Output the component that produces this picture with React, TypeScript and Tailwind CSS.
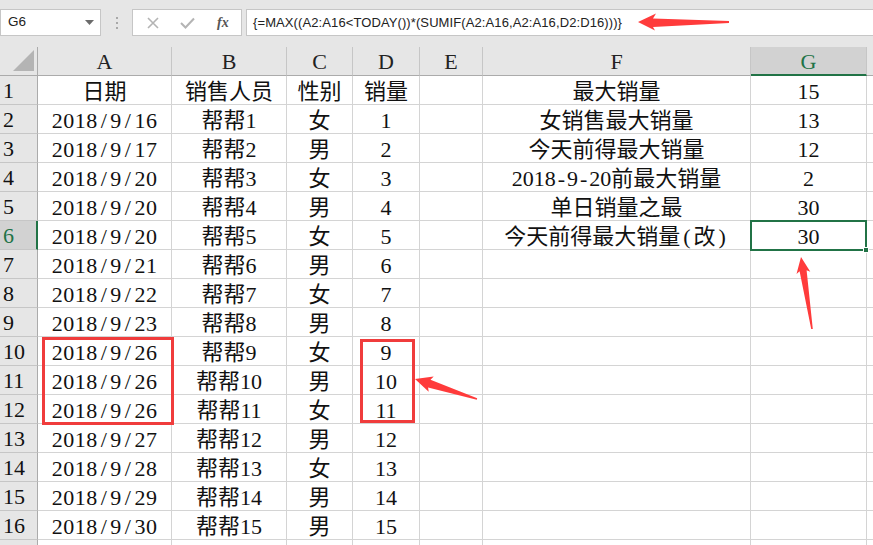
import React from 'react';

const COLS = ['A', 'B', 'C', 'D', 'E', 'F', 'G'];

const ROWS: string[][] = [
  ['日期', '销售人员', '性别', '销量', '', '最大销量', '15'],
  ['2018/9/16', '帮帮1', '女', '1', '', '女销售最大销量', '13'],
  ['2018/9/17', '帮帮2', '男', '2', '', '今天前得最大销量', '12'],
  ['2018/9/20', '帮帮3', '女', '3', '', '2018-9-20前最大销量', '2'],
  ['2018/9/20', '帮帮4', '男', '4', '', '单日销量之最', '30'],
  ['2018/9/20', '帮帮5', '女', '5', '', '今天前得最大销量(改)', '30'],
  ['2018/9/21', '帮帮6', '男', '6', '', '', ''],
  ['2018/9/22', '帮帮7', '女', '7', '', '', ''],
  ['2018/9/23', '帮帮8', '男', '8', '', '', ''],
  ['2018/9/26', '帮帮9', '女', '9', '', '', ''],
  ['2018/9/26', '帮帮10', '男', '10', '', '', ''],
  ['2018/9/26', '帮帮11', '女', '11', '', '', ''],
  ['2018/9/27', '帮帮12', '男', '12', '', '', ''],
  ['2018/9/28', '帮帮13', '女', '13', '', '', ''],
  ['2018/9/29', '帮帮14', '男', '14', '', '', ''],
  ['2018/9/30', '帮帮15', '男', '15', '', '', ''],
];

const grid = 'grid grid-cols-[38px_134px_115px_66px_67px_63px_268px_116px_1fr]';
const cellFont = "font-['Liberation_Serif','Noto_Sans_CJK_SC',serif] text-[22px] leading-none";

// SimSun draws / - ( ) half-width, wider than Times; pad them out
function CellText({ v }: { v: string }) {
  const parts = v.split(/([/()\-])/);
  return (
    <span className={v.includes('/') ? 'tracking-[0.5px]' : ''}>
      {parts.map((p, i) => {
        if (p === '/' || p === '(' || p === ')') return <span key={i} className="px-[3px]">{p}</span>;
        if (p === '-') return <span key={i} className="px-[2px]">{p}</span>;
        return <React.Fragment key={i}>{p}</React.Fragment>;
      })}
    </span>
  );
}

function Toolbar() {
  return (
    <div className="flex h-[47px] items-start bg-[#e6e6e6] pt-[9px]">
      <div className="flex h-[27px] w-[101px] items-center justify-between border border-[#c6c6c6] bg-white pl-[7px] pr-[6px]">
        <span className="font-['Liberation_Sans',sans-serif] text-[13.5px] text-[#222]">G6</span>
        <svg width="9" height="5" viewBox="0 0 9 5">
          <polygon points="0,0 9,0 4.5,5" fill="#6b6b6b" />
        </svg>
      </div>
      <div className="flex h-[27px] w-[31px] flex-col items-center justify-center gap-[3px]">
        <span className="h-[2px] w-[2px] bg-[#a8a8a8]" />
        <span className="h-[2px] w-[2px] bg-[#a8a8a8]" />
        <span className="h-[2px] w-[2px] bg-[#a8a8a8]" />
      </div>
      <div className="flex h-[27px] w-[110px] items-center border border-[#c6c6c6] bg-white">
        <svg className="ml-[14px]" width="12" height="12" viewBox="0 0 12 12">
          <path d="M1 1 L11 11 M11 1 L1 11" stroke="#b4b4b4" strokeWidth="1.6" />
        </svg>
        <svg className="ml-[21px]" width="15" height="12" viewBox="0 0 15 12">
          <path d="M1 6 L5.5 10.5 L14 1.5" stroke="#b4b4b4" strokeWidth="2" fill="none" />
        </svg>
        <span className="ml-[22px] font-['Liberation_Serif',serif] text-[14px] font-bold italic text-[#555]">fx</span>
      </div>
      <div className="ml-[4px] flex h-[27px] flex-1 items-center border border-r-0 border-[#c6c6c6] bg-white pl-[6px]">
        <span className="font-['Liberation_Sans',sans-serif] text-[13px] tracking-[0.1px] text-[#222]">
          {'{=MAX((A2:A16<TODAY())*(SUMIF(A2:A16,A2:A16,D2:D16)))}'}
        </span>
      </div>
    </div>
  );
}

function ColumnHeader() {
  return (
    <div className={`${grid} h-[29px] bg-[#e6e6e6]`}>
      <div className="relative border-r border-b border-[#ababab]">
        <svg className="absolute right-[3px] bottom-[4px]" width="21" height="21" viewBox="0 0 21 21">
          <polygon points="21,0 21,21 0,21" fill="#b4b4b4" />
        </svg>
      </div>
      {COLS.map((c) => {
        const active = c === 'G';
        return (
          <div
            key={c}
            className={
              active
                ? `flex items-center justify-center border-r border-[#c6c6c6] border-b-2 border-b-[#217346] bg-[#d2d2d2] pt-[2px] text-[#217346] ${cellFont}`
                : `flex items-center justify-center border-r border-b border-[#c6c6c6] border-b-[#ababab] pt-[2px] text-[#222] ${cellFont}`
            }
          >
            {c}
          </div>
        );
      })}
      <div className="border-b border-[#ababab]" />
    </div>
  );
}

function Row({ n, cells }: { n: number | null; cells: string[] }) {
  const active = n === 6;
  return (
    <div className={`${grid} h-[29px]`}>
      <div
        className={
          active
            ? `flex items-center border-b border-[#c6c6c6] border-r-2 border-r-[#217346] bg-[#d2d2d2] pl-[3px] pt-[2px] text-[#217346] ${cellFont}`
            : `flex items-center border-b border-[#c6c6c6] border-r border-r-[#ababab] bg-[#e6e6e6] pl-[3px] pt-[2px] text-[#111] ${cellFont}`
        }
      >
        {n}
      </div>
      {cells.map((v, i) => (
        <div
          key={i}
          className={`flex items-center justify-center border-r border-b border-[#d4d4d4] pt-[3px] text-[#111] ${cellFont}`}
        >
          <CellText v={v} />
        </div>
      ))}
      <div className="border-b border-[#d4d4d4]" />
    </div>
  );
}

export default function App() {
  return (
    <div className="relative h-[545px] w-[873px] overflow-hidden bg-white">
      <Toolbar />
      <ColumnHeader />
      {ROWS.map((r, i) => (
        <Row key={i} n={i + 1} cells={r} />
      ))}
      {/* row 17 is only a sliver at the bottom edge */}
      <Row n={null} cells={['', '', '', '', '', '', '']} />

      {/* selection of G6 */}
      <div className="pointer-events-none absolute left-[750px] top-[220px] h-[31px] w-[117px] border-2 border-[#217346]">
        <span className="absolute -right-[4px] -bottom-[4px] h-[6px] w-[6px] border border-white bg-[#217346]" />
      </div>

      {/* red annotation boxes */}
      <div className="pointer-events-none absolute left-[42px] top-[337px] h-[88px] w-[132px] border-[3px] border-[#f03c3c]" />
      <div className="pointer-events-none absolute left-[360px] top-[339px] h-[84px] w-[55px] border-[3px] border-[#f03c3c]" />

      <svg className="pointer-events-none absolute left-0 top-0" width="873" height="545" viewBox="0 0 873 545">
        <polygon points="638,22 656,13.5 653,18.5 729,21 729,23 653,27 655,30.5" fill="#ff3b3b" />
        <polygon points="415,379 433.7,376.6 430.5,379.8 477.2,398.2 476.8,399.8 428.1,387.4 428.7,391.8" fill="#ff3b3b" />
        <polygon points="801,257 810.3,271.7 806.6,270.3 812.8,328.9 811.2,329.1 799.6,271.3 796.5,273.9" fill="#ff3b3b" />
      </svg>
    </div>
  );
}
